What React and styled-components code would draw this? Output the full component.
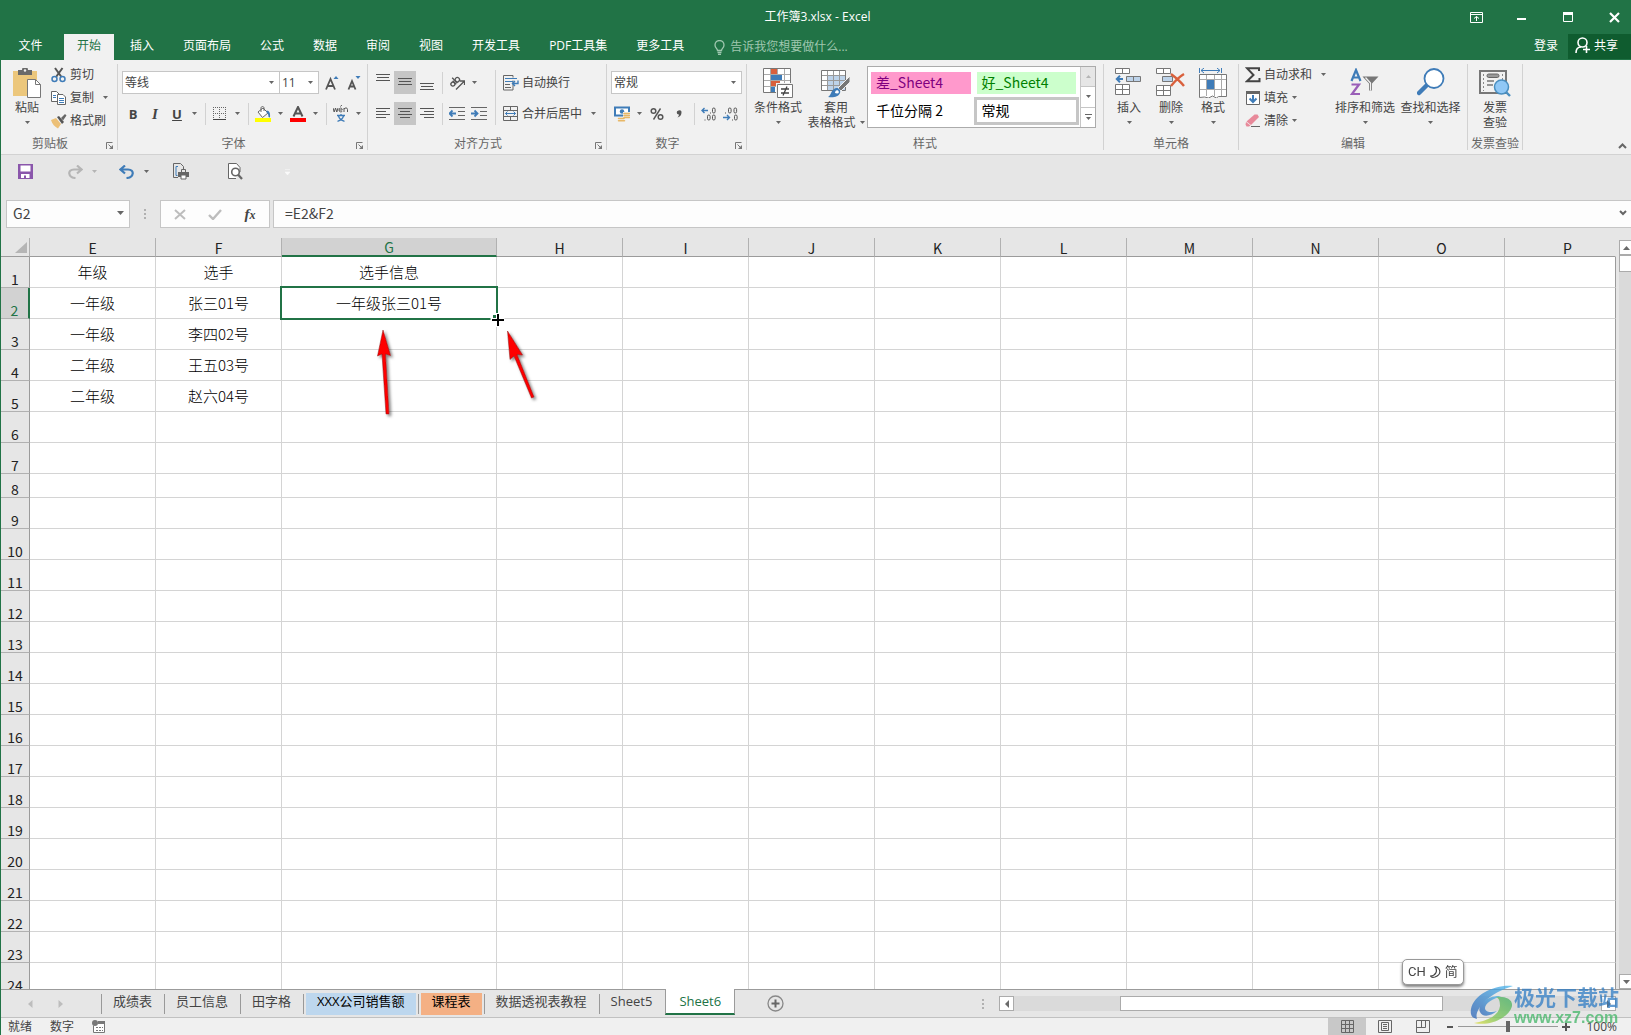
import React from 'react';
import styled, { createGlobalStyle, css } from 'styled-components';

const GREEN = '#217346';
const GRAY = '#6a6a6a';
const BLUE = '#3f7cb8';

const TABS = ['开始', '插入', '页面布局', '公式', '数据', '审阅', '视图', '开发工具', 'PDF工具集', '更多工具'];
const COLUMNS = [
    { id: 'E', w: 126 }, { id: 'F', w: 126 }, { id: 'G', w: 215 }, { id: 'H', w: 126 },
    { id: 'I', w: 126 }, { id: 'J', w: 126 }, { id: 'K', w: 126 }, { id: 'L', w: 126 },
    { id: 'M', w: 126 }, { id: 'N', w: 126 }, { id: 'O', w: 126 }, { id: 'P' },
];
const DATA = {
    1: { E: '年级', F: '选手', G: '选手信息' },
    2: { E: '一年级', F: '张三01号', G: '一年级张三01号' },
    3: { E: '一年级', F: '李四02号' },
    4: { E: '二年级', F: '王五03号' },
    5: { E: '二年级', F: '赵六04号' },
};
const ROWS = Array.from({ length: 24 }, (_, i) => i + 1);
const SHEETS = [
    { name: '成绩表' },
    { name: '员工信息' },
    { name: '田字格' },
    { name: 'XXX公司销售额', color: '#bdd7ee' },
    { name: '课程表', color: '#f4b084' },
    { name: '数据透视表教程' },
    { name: 'Sheet5' },
];

/* ---------- icons ---------- */

const Svg = ({ w = 16, h = 16, children, ...rest }) => (
    <svg width={w} height={h} viewBox={`0 0 ${w} ${h}`} fill="none" aria-hidden="true" {...rest}>{children}</svg>
);
const Caret = ({ color = '#666' }) => <Svg w={5} h={3}><path d="M0 0h5L2.5 3z" fill={color}/></Svg>;

const Lines = ({ y, widths }) => (
    <Svg w={14} h={19} shapeRendering="crispEdges">
        {widths.map(([x, w], i) => <rect key={i} x={x} y={y + i * 3} width={w} height="1" fill="#555"/>)}
    </Svg>
);
const PasteIcon = () => (
    <Svg w={28} h={30}>
        <path d="M0 3h24v25H0z" fill="#ecc77c"/>
        <path d="M5 2h4a3 3 0 0 1 6 0h4v5H5z" fill="#6a6a6a"/>
        <circle cx="12" cy="2.5" r="1.2" fill="#f1f1f1"/>
        <path d="M14.500 11.500h8l5 5v13h-13z" fill="#fff" stroke="#777"/>
        <path d="M22.500 11.500v5h5" stroke="#777"/>
    </Svg>
);
const CutIcon = () => (
    <Svg>
        <path d="M4 1l6.500 9M11.500 1L5 10" stroke="#555" strokeWidth="2"/>
        <circle cx="3.500" cy="12" r="2.500" stroke={BLUE} strokeWidth="1.500"/>
        <circle cx="11.500" cy="12" r="2.500" stroke={BLUE} strokeWidth="1.500"/>
    </Svg>
);
const CopyIcon = () => (
    <Svg>
        <path d="M.5 1.500h5l2.500 2.500v7.500h-7.500z" fill="#fff" stroke="#666"/>
        <path d="M2 5.500h3M2 7.500h3" stroke={BLUE}/>
        <path d="M6.500 4.500h5.500l2.500 2.500v7.500h-8z" fill="#fff" stroke="#666"/>
        <path d="M8 8.500h5M8 10.500h5M8 12.500h5" stroke={BLUE}/>
    </Svg>
);
const BrushIcon = () => (
    <Svg>
        <path d="M0 7l5-2 5 6-3 4.500C4 14 1 11 0 7z" fill="#ecc077"/>
        <path d="M6 4l2-1 5 6-2 2z" fill="#555"/>
        <path d="M10 5l4-4 1.500 1.500-3.500 5z" fill="#666"/>
    </Svg>
);
const FontSizeIcon = ({ small }) => (
    <Svg w={14} h={16}>
        <path d={small ? 'M1.500 14.500L5 6l3.500 8.500M2.700 11.500h4.600' : 'M1 14.500L5.500 4l4.500 10.500M2.500 11h6'} stroke="#555" strokeWidth="1.800"/>
        <path d={small ? 'M8.500 1h5L11 4z' : 'M8.500 4h5L11 1z'} fill={BLUE}/>
    </Svg>
);
const BorderIcon = () => (
    <Svg w={14} h={14} shapeRendering="crispEdges">
        <path d="M0 .5h13M0 6.500h13" stroke="#666" strokeDasharray="1 1"/>
        <path d="M.5 0v12M6.500 0v12M12.500 0v12" stroke="#666" strokeDasharray="1 1"/>
        <path d="M0 12.500h13" stroke="#444"/>
    </Svg>
);
const FillIcon = () => (
    <Svg>
        <path d="M3 6l5-4 5 5-5.500 4.500z" fill="#fff" stroke="#666"/>
        <path d="M6 6V2c0-2 3-2 3 0v3" stroke="#666"/>
        <path d="M11.500 4.500c3 0 4 3 3.500 7l-1.500-.5c0-2.500-.5-3.500-2-4.500z" fill={BLUE}/>
        <path d="M0 12h16v4H0z" fill="#ff0"/>
    </Svg>
);
const FontColorIcon = () => (
    <Svg>
        <path d="M3.500 10.500L8 1l4.500 9.500M5 7.500h6" stroke="#555" strokeWidth="2"/>
        <path d="M0 12h16v4H0z" fill="#f00"/>
    </Svg>
);
const PhoneticIcon = () => (
    <Svg w={16} h={17}>
        <path d="M0 3l1.200 4L2.500 3l1.300 4L5 3M6 5h3.200c0-2.600-3.200-2.600-3.200 0s3.200 2 3.200 1M7.500 1.500L8.800 0M11 7V3M11 4c1-1.500 3.500-1.500 3.500.5V7" stroke="#555"/>
        <path d="M4 10.500h8M8 9v1.500M5.500 11c.7 2.500 3 4.500 6 5.300M10.500 11c-.7 2.500-3 4.500-6 5.300" stroke={BLUE} strokeWidth="1.300"/>
    </Svg>
);
const OrientIcon = () => (
    <Svg>
        <g transform="rotate(-45 6 7)" stroke="#555" strokeWidth="1.300">
            <circle cx="3" cy="7" r="2"/><path d="M5.300 4.500v5M7 2v7.500"/><circle cx="9.300" cy="7" r="2.200"/>
        </g>
        <path d="M7 14.500l8-8M11 6h4.500v4" stroke="#555" strokeWidth="1.300"/>
    </Svg>
);
const IndentIcon = ({ right }) => (
    <Svg w={16} h={13}>
        <path d="M0 .5h16M9 4.500h7M9 8.500h7M0 12.500h16" stroke="#666" shapeRendering="crispEdges"/>
        <path d={right ? 'M0 6.500h6M3.500 3.500l3 3-3 3' : 'M7 6.500H1M3.500 3.500l-3 3 3 3'} stroke={BLUE} strokeWidth="1.800"/>
    </Svg>
);
const WrapIcon = () => (
    <Svg>
        <path d="M10 5.500v9.500H.5V.5h9.500v2" stroke="#666"/>
        <path d="M2 3.500h12M2 6.500h8" stroke={BLUE}/>
        <path d="M2 9.500h5M2 12.500h6" stroke="#666"/>
        <path d="M15 5.500v3H9.500M12 6l-2.500 2.500L12 11" stroke={BLUE} strokeWidth="1.400"/>
    </Svg>
);
const MergeIcon = () => (
    <Svg>
        <path d="M.5.5h14v14H.5zM.5 4.500h14M.5 10.500h14M7.500.5v4M7.500 10.500v4" stroke="#666"/>
        <path d="M2.500 7.500h10M4.500 5.500l-2 2 2 2M10.500 5.500l2 2-2 2" stroke={BLUE}/>
    </Svg>
);
const MoneyIcon = () => (
    <Svg>
        <path d="M1 1.500h14v8H1z" fill="#fff" stroke={BLUE} strokeWidth="2"/>
        <circle cx="8" cy="5.500" r="2.200" fill={BLUE}/>
        <path d="M9 6h7v8H9zM4 11h7v5H4z" fill="#f1f1f1"/>
        <path d="M10 7.500h5.500M10 9.500h5.500M10 11.500h5.500M4.500 12.500h5.500M4.500 14.800h6" stroke="#e8b766" strokeWidth="1.500" strokeLinecap="round"/>
    </Svg>
);
const PercentIcon = () => (
    <Svg w={14} h={14}>
        <circle cx="3.500" cy="4" r="2.300" stroke="#555" strokeWidth="1.500"/><circle cx="10.500" cy="10" r="2.300" stroke="#555" strokeWidth="1.500"/>
        <path d="M10.500 1.500l-7 11" stroke="#555" strokeWidth="1.400"/>
    </Svg>
);
const CommaIcon = () => <Svg w={8} h={10}><path d="M3.500 1.500a2 2 0 0 1 3 2C6.500 6 5 8 2.500 8.500c1-1 1.500-2 1.500-3a2 2 0 0 1-.5-4z" fill="#555"/></Svg>;
const Zero = ({ x, y }) => <rect x={x} y={y} width="2.600" height="5" rx="1.300" stroke="#555"/>;
const DecimalIcon = ({ less }) => (
    <Svg w={16} h={14}>
        {less ? (
            <>
                <path d="M2 6h1" stroke="#555"/><Zero x="5.500" y="1"/><Zero x="11" y="1"/>
                <path d="M0 10.500h6M4 8l2.500 2.500L4 13" stroke={BLUE} strokeWidth="1.400"/>
                <path d="M9 13h1" stroke="#555"/><Zero x="11.500" y="8"/>
            </>
        ) : (
            <>
                <path d="M7 3.500H1M3.500 1L1 3.500 3.500 6" stroke={BLUE} strokeWidth="1.400"/>
                <path d="M9 6h1" stroke="#555"/><Zero x="11.500" y="1"/>
                <path d="M3.500 13h1" stroke="#555"/><Zero x="6.500" y="8"/><Zero x="11.500" y="8"/>
            </>
        )}
    </Svg>
);
const CondIcon = () => (
    <Svg w={30} h={30}>
        <path d="M.5.5h27v24H.5z" fill="#fff" stroke="#777"/>
        <path d="M1 6.500h26M1 12.500h26M1 18.500h26M7.500 1v23M14.500 1v23M21.500 1v23" stroke="#aaa"/>
        <path d="M8 1h6v5H8zM8 13h9v5H8z" fill="#d9603c"/>
        <path d="M8 7h11v5H8zM8 19h4v5H8z" fill={BLUE}/>
        <path d="M13 15h17v15H13z" fill="#f1f1f1"/>
        <path d="M14.500 16.500h15v13h-15z" fill="#fff" stroke="#777"/>
        <path d="M18 21h8M18 25h8M24 18.500l-4 9" stroke="#444" strokeWidth="1.300"/>
    </Svg>
);
const TableFormatIcon = () => (
    <Svg w={30} h={30}>
        <path d="M.5 2.500h24v20H.5z" fill="#fff" stroke="#777"/>
        <path d="M7 8h17v14H7z" fill="#bdd3ea"/>
        <path d="M1 7.500h23M1 12.500h23M1 17.500h23M6.500 3v19M12.500 3v19M18.500 3v19" stroke="#999"/>
        <path d="M29 8v6l-9 9-3-3z" fill="#777" stroke="#f1f1f1"/>
        <path d="M7 29c3-1 3-8 8-9 3-.5 5 2 4 5-1.500 4-7 5-12 4z" fill={BLUE}/>
        <path d="M14 25c0-2 1.500-3.500 3-2.500s1 3-1 3z" fill="#fff"/>
    </Svg>
);
const InsertIcon = () => (
    <Svg w={28} h={30}>
        <path d="M.5.5h14v5H.5zM7.500.5v5M.5 16.500h14v10H.5zM7.500 16.500v10M.5 21.500h14" fill="#fff" stroke="#777"/>
        <path d="M11.500 8.500h14v5h-14zM18.500 8.500v5" fill="#bdd3ea" stroke="#777"/>
        <path d="M8 11H2M5 7.800L1.800 11 5 14.200" stroke={BLUE} strokeWidth="2"/>
    </Svg>
);
const DeleteIcon = () => (
    <Svg w={30} h={30}>
        <path d="M.5.5h14v5H.5zM7.500.5v5M.5 17.500h14v10H.5zM7.500 17.500v10M.5 22.500h14" fill="#fff" stroke="#777"/>
        <path d="M6.500 8.500h10v5h-10z" fill="#bdd3ea" stroke="#777"/>
        <path d="M15 6c4 3 9 7 13 12M28 6c-5 3-9 7-13 12" stroke="#d9603c" strokeWidth="2.400"/>
    </Svg>
);
const FormatIcon = () => (
    <Svg w={28} h={30}>
        <path d="M.5 0v5M22.500 0v5M2 2.500h19M5 0L2 2.500 5 5M18 0l3 2.500L18 5" stroke={BLUE}/>
        <path d="M.5 6.500h27v22h-8l-2 1.500-4-2-4 2-4-1-5 .5z" fill="#fff" stroke="#777"/>
        <path d="M1 11.500h26M1 21.500h26M7.500 7v21M15.500 7v21M22.500 7v21" stroke="#aaa"/>
        <path d="M8 12h7v9H8z" fill={BLUE}/>
    </Svg>
);
const SigmaIcon = () => <Svg><path d="M14 4V1.200H2L8.500 8 2 14.300h12.500V11" stroke="#444" strokeWidth="2"/></Svg>;
const FillDownIcon = () => (
    <Svg>
        <path d="M1.500 1.500h13v13h-13z" fill="#fff" stroke="#666"/><path d="M1 1h14v3H1z" fill="#666"/>
        <path d="M8 5v7M4.500 8.500L8 12l3.500-3.500" stroke={BLUE} strokeWidth="2"/>
    </Svg>
);
const EraserIcon = () => (
    <Svg>
        <path d="M9.500 1.500h3l1.500 2.500-8 8-4.500-3.500z" fill="#e8899a"/>
        <path d="M1 9l4.500 3.500-1.500 1h-2.500L.5 11.500z" fill="#e8899a"/>
        <path d="M6 13.500h9" stroke="#666"/>
    </Svg>
);
const SortIcon = () => (
    <Svg w={30} h={30}>
        <path d="M1.500 13L6 2l4.500 11M3 9.500h6" stroke={BLUE} strokeWidth="2.200"/>
        <path d="M1.500 16.500h7.500L2 26h8" stroke="#9a5fb8" strokeWidth="2.200"/>
        <path d="M12.500 8.500h16l-6.500 7v7h-3v-7z" fill="#777"/>
        <path d="M15.500 9.500l5 5.500v7.500" stroke="#f1f1f1" strokeWidth="1.300"/>
    </Svg>
);
const FindIcon = () => (
    <Svg w={28} h={30}>
        <path d="M11 16L2 25" stroke={BLUE} strokeWidth="4.500" strokeLinecap="round"/>
        <circle cx="17" cy="10.500" r="9.500" fill="#fff" stroke={BLUE} strokeWidth="1.800"/>
    </Svg>
);
const InvoiceIcon = () => (
    <Svg w={32} h={30}>
        <path d="M1 3h26v22H1z" fill="#f1f1f1" stroke="#777" strokeWidth="2"/>
        <path d="M4.500 6v17M23.500 6v17" stroke="#888" strokeDasharray="2 2"/>
        <rect x="8" y="6" width="12" height="3.500" rx="1.700" fill="#999" stroke="#666"/>
        <path d="M8 13h7M8 17h6" stroke="#777" strokeWidth="1.500"/>
        <path d="M27 24l4 4" stroke="#4a8fc0" strokeWidth="2.400"/>
        <circle cx="22.500" cy="19" r="7" fill="#90c8f6" stroke="#4a8fc0" strokeWidth="1.500"/>
    </Svg>
);
const LauncherIcon = () => (
    <Svg w={8} h={8}><path d="M.5 7V.5H6.500M2.500 2.500L6 6" stroke="#777"/><path d="M7 3v4H3z" fill="#777"/></Svg>
);
const SaveIcon = () => (
    <Svg w={15} h={15}><path d="M0 0h15v15H0z" fill="#8a56ab"/><path d="M2.500 1.500h10v6h-10z" fill="#fff"/><path d="M3 10h8.500v4H8v-2.500H6V14H3z" fill="#fff"/></Svg>
);
const UndoIcon = ({ flip, color }) => (
    <Svg w={16} h={14} transform={flip ? 'scale(-1 1)' : undefined}>
        <path d="M6 .5L1.500 4.500 6 8.500M2 4.500h7c7 0 6 8-1.500 8.500" stroke={color} strokeWidth="2.200"/>
    </Svg>
);
const QuickPrintIcon = () => (
    <Svg w={17} h={17}>
        <path d="M5 14.500H.5V.5h7l3 3V6" stroke="#666"/><path d="M5 3.500H3v9h1.500" stroke={BLUE}/>
        <path d="M8.500 6.500h4v3h-4z" stroke="#666"/><path d="M5 9h11v5H5z" fill="#666"/><path d="M8 12h5v4H8z" fill="#fff" stroke="#666"/>
    </Svg>
);
const PreviewIcon = () => (
    <Svg w={15} h={17}>
        <path d="M12 9V4.500L8.500.5h-8v15H8" fill="#fff" stroke="#666"/>
        <circle cx="7.500" cy="9" r="3.800" fill="#fff" stroke="#666" strokeWidth="1.600"/><path d="M10 11.500l4 4.500" stroke="#666" strokeWidth="2.200"/>
    </Svg>
);

/* ---------- page ---------- */

const Divider = () => <ShortRule/>;
const Drop = ({ label, color }) => <Tool $w={13} aria-label={label}><Caret color={color}/></Tool>;

const Combo = ({ label, value, width }) => (
    <ComboBox $w={width}>
        <select aria-label={label} defaultValue={value}><option>{value}</option></select>
        <Caret/>
    </ComboBox>
);

const Big = ({ icon, lines, width, drop }) => (
    <BigButton $w={width}>
        <BigIcon>{icon}</BigIcon>
        {lines.map((t, i) => <span key={t}>{t}{drop && i === 1 && <Caret/>}</span>)}
        {drop && lines.length === 1 && <span><Caret/></span>}
    </BigButton>
);

const Small = ({ icon, children, drop, gap }) => (
    <SmallRow $gap={gap}>
        <SmallButton><i>{icon}</i>{children}</SmallButton>
        {drop && <Drop label={children + '选项'}/>}
    </SmallRow>
);

const Group = ({ title, width, launcher, children }) => (
    <>
        <GroupBox $w={width}>
            <GroupBody>{children}</GroupBody>
            <GroupFoot><span>{title}</span>{launcher && <Launcher aria-label={title + '设置'}><LauncherIcon/></Launcher>}</GroupFoot>
        </GroupBox>
        <GroupRule/>
    </>
);

const Header = () => (
    <HeaderBar>
        <TitleRow>
            <h1>工作簿3.xlsx - Excel</h1>
            <WindowButtons>
                <button aria-label="功能区显示选项"><Svg w={13} h={11}><path d="M.5.5h12v10H.5zM.5 2.500h12M6.500 9V4.500M4 6.500l2.500-2 2.500 2" stroke="#fff"/></Svg></button>
                <button aria-label="最小化"><Svg w={10} h={11}><path d="M0 7h9" stroke="#fff" strokeWidth="2"/></Svg></button>
                <button aria-label="最大化"><Svg w={11} h={11}><path d="M.5.5h9v9h-9z" stroke="#fff"/><path d="M0 0h10v3H0z" fill="#fff"/></Svg></button>
                <button aria-label="关闭"><Svg w={11} h={11}><path d="M1 1l9 9M10 1l-9 9" stroke="#fff" strokeWidth="2.200"/></Svg></button>
            </WindowButtons>
        </TitleRow>
        <TabRow>
            <FileTab>文件</FileTab>
            {TABS.map((t, i) => <RibbonTab key={t} $active={i === 0}>{t}</RibbonTab>)}
            <TellMe>
                <Svg w={11} h={15}><path d="M3.500 10.500C3.500 8.500 1 8 1 5a4.500 4.500 0 0 1 9 0c0 3-2.500 3.500-2.500 5.500zM3.500 12.500h4M4 14.500h3" stroke="#9fc7af" strokeWidth="1.300"/></Svg>
                <input aria-label="告诉我" placeholder="告诉我您想要做什么..."/>
            </TellMe>
            <LoginButton>登录</LoginButton>
            <ShareButton>
                <Svg w={16} h={17}><circle cx="7.500" cy="5.500" r="4.500" stroke="#fff" strokeWidth="1.600"/><path d="M1 16c0-4 2-6 5-6M8 12.500h7M11.500 9v7" stroke="#fff" strokeWidth="1.600"/></Svg>
                共享
            </ShareButton>
        </TabRow>
    </HeaderBar>
);

const Ribbon = () => (
    <RibbonBar>
        <Group title="剪贴板" width={116} launcher>
            <Big width={44} icon={<PasteIcon/>} lines={['粘贴']} drop/>
            <SmallStack>
                <Small icon={<CutIcon/>}>剪切</Small>
                <Small icon={<CopyIcon/>} drop gap={5}>复制</Small>
                <Small icon={<BrushIcon/>}>格式刷</Small>
            </SmallStack>
        </Group>
        <Group title="字体" width={249} launcher>
            <ToolRows>
                <ToolRow>
                    <Combo label="字体" value="等线" width={158}/>
                    <Combo label="字号" value="11" width={40}/>
                    <Tool aria-label="增大字号"><FontSizeIcon/></Tool>
                    <Tool aria-label="减小字号"><FontSizeIcon small/></Tool>
                </ToolRow>
                <ToolRow>
                    <Tool aria-label="加粗"><b>B</b></Tool>
                    <Tool aria-label="倾斜"><em>I</em></Tool>
                    <Tool aria-label="下划线"><u>U</u></Tool>
                    <Drop label="下划线样式"/>
                    <Divider/>
                    <Tool aria-label="边框"><BorderIcon/></Tool>
                    <Drop label="边框样式"/>
                    <Divider/>
                    <Tool aria-label="填充颜色"><FillIcon/></Tool>
                    <Drop label="更多填充颜色"/>
                    <Tool aria-label="字体颜色"><FontColorIcon/></Tool>
                    <Drop label="更多字体颜色"/>
                    <Divider/>
                    <Tool aria-label="拼音"><PhoneticIcon/></Tool>
                    <Drop label="拼音选项"/>
                </ToolRow>
            </ToolRows>
        </Group>
        <Group title="对齐方式" width={238} launcher>
            <ToolRows>
                <ToolRow>
                    <Tool aria-label="顶端对齐"><Lines y={1} widths={[[0, 14], [1, 12], [0, 14]]}/></Tool>
                    <Tool aria-label="垂直居中" $on><Lines y={5} widths={[[0, 14], [1, 12], [0, 14]]}/></Tool>
                    <Tool aria-label="底端对齐"><Lines y={10} widths={[[0, 14], [1, 12], [0, 14]]}/></Tool>
                    <Divider/>
                    <Tool aria-label="方向"><OrientIcon/></Tool>
                    <Drop label="方向选项"/>
                </ToolRow>
                <ToolRow>
                    <Tool aria-label="左对齐"><Lines y={4} widths={[[0, 14], [0, 10], [0, 14], [0, 10]]}/></Tool>
                    <Tool aria-label="居中" $on><Lines y={4} widths={[[0, 14], [2, 10], [0, 14], [2, 10]]}/></Tool>
                    <Tool aria-label="右对齐"><Lines y={4} widths={[[0, 14], [4, 10], [0, 14], [4, 10]]}/></Tool>
                    <Divider/>
                    <Tool aria-label="减少缩进"><IndentIcon/></Tool>
                    <Tool aria-label="增加缩进"><IndentIcon right/></Tool>
                </ToolRow>
            </ToolRows>
            <TallRule/>
            <ToolRows>
                <Small icon={<WrapIcon/>}>自动换行</Small>
                <Small icon={<MergeIcon/>} drop gap={5}>合并后居中</Small>
            </ToolRows>
        </Group>
        <Group title="数字" width={139} launcher>
            <ToolRows>
                <ToolRow><Combo label="数字格式" value="常规" width={131}/></ToolRow>
                <ToolRow>
                    <Tool aria-label="会计数字格式"><MoneyIcon/></Tool>
                    <Drop label="货币选项"/>
                    <Tool aria-label="百分比"><PercentIcon/></Tool>
                    <Tool aria-label="千位分隔"><CommaIcon/></Tool>
                    <Divider/>
                    <Tool aria-label="增加小数位"><DecimalIcon/></Tool>
                    <Tool aria-label="减少小数位"><DecimalIcon less/></Tool>
                </ToolRow>
            </ToolRows>
        </Group>
        <Group title="样式" width={356}>
            <Big width={54} icon={<CondIcon/>} lines={['条件格式']} drop/>
            <Big width={62} icon={<TableFormatIcon/>} lines={['套用', '表格格式']} drop/>
            <Gallery>
                <GalleryGrid>
                    <Swatch $bg="#ff99cc" $fg="#800080">差_Sheet4</Swatch>
                    <Swatch $bg="#ccffcc" $fg="#008000">好_Sheet4</Swatch>
                    <Swatch>千位分隔 2</Swatch>
                    <Swatch $selected>常规</Swatch>
                </GalleryGrid>
                <GalleryNav>
                    <button aria-label="上一行" disabled><Svg w={5} h={3}><path d="M0 3h5L2.500 0z" fill="#b5b5b5"/></Svg></button>
                    <button aria-label="下一行"><Caret/></button>
                    <button aria-label="其他样式"><Svg w={7} h={7}><path d="M0 .5h7" stroke="#666"/><path d="M1 3h5L3.500 6z" fill="#666"/></Svg></button>
                </GalleryNav>
            </Gallery>
        </Group>
        <Group title="单元格" width={134}>
            <Big width={42} icon={<InsertIcon/>} lines={['插入']} drop/>
            <Big width={42} icon={<DeleteIcon/>} lines={['删除']} drop/>
            <Big width={42} icon={<FormatIcon/>} lines={['格式']} drop/>
        </Group>
        <Group title="编辑" width={228}>
            <SmallStack $w={89}>
                <Small icon={<SigmaIcon/>} drop gap={5}>自动求和</Small>
                <Small icon={<FillDownIcon/>} drop>填充</Small>
                <Small icon={<EraserIcon/>} drop>清除</Small>
            </SmallStack>
            <Big width={66} icon={<SortIcon/>} lines={['排序和筛选']} drop/>
            <Big width={65} icon={<FindIcon/>} lines={['查找和选择']} drop/>
        </Group>
        <Group title="发票查验" width={54}>
            <Big width={46} icon={<InvoiceIcon/>} lines={['发票', '查验']}/>
        </Group>
        <CollapseButton aria-label="折叠功能区"><Svg w={9} h={6}><path d="M1 5l3.500-3.500L8 5" stroke="#666" strokeWidth="2"/></Svg></CollapseButton>
    </RibbonBar>
);

const Quick = () => (
    <QuickBar>
        <Tool aria-label="保存"><SaveIcon/></Tool>
        <QuickPair>
            <Tool aria-label="恢复" disabled><UndoIcon flip color="#b5b5b5"/></Tool><Drop label="恢复列表" color="#b5b5b5"/>
        </QuickPair>
        <QuickPair>
            <Tool aria-label="撤消"><UndoIcon color={BLUE}/></Tool><Drop label="撤消列表"/>
        </QuickPair>
        <Tool $w={26} aria-label="快速打印"><QuickPrintIcon/></Tool>
        <Tool $w={26} aria-label="打印预览"><PreviewIcon/></Tool>
        <Tool aria-label="自定义"><Svg w={5} h={6}><path d="M0 .5h5M0 3h5L2.500 6z" fill="#fafafa" stroke="#fafafa" strokeWidth=".5"/></Svg></Tool>
    </QuickBar>
);

const Dots = () => <Svg w={2} h={10}><path d="M0 0h2v2H0zM0 4h2v2H0zM0 8h2v2H0z" fill="#b0b0b0"/></Svg>;

const FormulaBar = () => (
    <FormulaRow>
        <NameBox>
            <input aria-label="名称框" defaultValue="G2"/>
            <button aria-label="名称列表"><Svg w={7} h={4}><path d="M0 0h7L3.500 4z" fill="#666"/></Svg></button>
        </NameBox>
        <DotsBox><Dots/></DotsBox>
        <FormulaButtons>
            <Tool aria-label="取消"><Svg w={12} h={11}><path d="M1 1l10 9M11 1L1 10" stroke="#bdbdbd" strokeWidth="2"/></Svg></Tool>
            <Tool aria-label="输入"><Svg w={14} h={11}><path d="M1 6l4 4L13 1" stroke="#bdbdbd" strokeWidth="2.400"/></Svg></Tool>
            <Tool aria-label="插入函数"><Fx>f<small>x</small></Fx></Tool>
        </FormulaButtons>
        <FormulaInput>
            <input aria-label="编辑栏" defaultValue="=E2&F2"/>
            <button aria-label="展开编辑栏"><Svg w={8} h={6}><path d="M1 1l3 3 3-3" stroke="#666" strokeWidth="2"/></Svg></button>
        </FormulaInput>
    </FormulaRow>
);

const Annotations = () => (
    <NoteLayer width="560" height="190" viewBox="0 0 560 190" aria-hidden="true">
        <defs><filter id="shade" x="-50%" y="-20%" width="200%" height="140%"><feDropShadow dx="2" dy="2" stdDeviation="1.500" floodColor="#000" floodOpacity=".5"/></filter></defs>
        <g filter="url(#shade)" fill="#fe0000" stroke="#8d1a1a" strokeWidth=".5">
            <path d="M382 92l7.500 25.500-5-1.500 3.500 60h-3L381 116l-4.500 2z"/>
            <path d="M506.500 93l15 24-5.500-.5L533 159l-2.500 1L513 118l-4 3.500z"/>
        </g>
        <path d="M496.500 75v14M489.500 82h14" stroke="#fff" strokeWidth="5"/>
        <path d="M492 77h3v3h-3z" fill={GREEN}/>
        <path d="M497 76v12M491 82h12" stroke="#000" strokeWidth="2"/>
    </NoteLayer>
);

const Sheet = () => (
    <SheetArea>
        <GridView>
            <GridTable>
                <colgroup><col width="29"/>{COLUMNS.map(c => <col key={c.id} width={c.w}/>)}</colgroup>
                <thead>
                    <tr>
                        <Corner><Svg w={12} h={11}><path d="M12 0v11H0z" fill="#b5b5b5"/></Svg></Corner>
                        {COLUMNS.map(c => <ColHead key={c.id} $on={c.id === 'G'}>{c.id}</ColHead>)}
                    </tr>
                </thead>
                <tbody>
                    {ROWS.map(r => (
                        <GridRow key={r} $short={r === 8}>
                            <RowHead $on={r === 2}>{r}</RowHead>
                            {COLUMNS.map(c => <Cell key={c.id} $on={r === 2 && c.id === 'G'}>{DATA[r] && DATA[r][c.id]}</Cell>)}
                        </GridRow>
                    ))}
                </tbody>
            </GridTable>
        </GridView>
        <VScroll>
            <ScrollButton aria-label="向上滚动"><Svg w={7} h={4}><path d="M0 4h7L3.500 0z" fill={GRAY}/></Svg></ScrollButton>
            <VThumb/>
            <ScrollButton aria-label="向下滚动"><Svg w={7} h={4}><path d="M0 0h7L3.500 4z" fill={GRAY}/></Svg></ScrollButton>
        </VScroll>
        <Annotations/>
    </SheetArea>
);

const SheetTabs = () => (
    <SheetBar>
        <SheetNav>
            <button aria-label="上一个工作表"><Svg w={5} h={8}><path d="M4.500 0v8L0 4z" fill="#bdbdbd"/></Svg></button>
            <button aria-label="下一个工作表"><Svg w={5} h={8}><path d="M.5 0v8L5 4z" fill="#bdbdbd"/></Svg></button>
        </SheetNav>
        {SHEETS.map(s => <TabSlot key={s.name}><SheetTab $color={s.color}>{s.name}</SheetTab></TabSlot>)}
        <ActiveSheet>Sheet6</ActiveSheet>
        <AddSheet aria-label="新建工作表"><Svg w={17} h={17}><circle cx="8.500" cy="8.500" r="7.500" stroke="#888" strokeWidth="1.300"/><path d="M8.500 4.500v8M4.500 8.500h8" stroke="#666" strokeWidth="2"/></Svg></AddSheet>
        <HScroll>
            <Dots/>
            <HScrollLine>
                <ScrollButton aria-label="向左滚动"><Svg w={4} h={8}><path d="M4 0v8L0 4z" fill={GRAY}/></Svg></ScrollButton>
                <HTrack><span/></HTrack>
                <ScrollButton aria-label="向右滚动"><Svg w={4} h={8}><path d="M0 0v8l4-4z" fill={GRAY}/></Svg></ScrollButton>
            </HScrollLine>
        </HScroll>
    </SheetBar>
);

const Status = () => (
    <StatusBar>
        <span>就绪</span>
        <span>数字</span>
        <Svg w={13} h={13}><path d="M1.500 5.500v7h11v-10H7" fill="#fff" stroke="#777"/><path d="M6 1h7v3H6z" fill="#777"/><circle cx="3" cy="3" r="3" fill="#777"/><path d="M4 7.500h7M4 10.500h7" stroke="#777" strokeDasharray="2 1"/></Svg>
        <StatusRight>
            <ViewButton $on aria-label="普通"><Svg w={13} h={13}><path d="M.5.5h12v12H.5zM.5 4.500h12M.5 8.500h12M4.500.5v12M8.500.5v12" stroke="#666"/></Svg></ViewButton>
            <ViewButton aria-label="页面布局视图"><Svg w={14} h={13}><path d="M.5.5h13v12H.5zM3.500 2.500h7v8h-7zM5 4.500h4M5 6.500h4M5 8.500h4" stroke="#666"/></Svg></ViewButton>
            <ViewButton aria-label="分页预览"><Svg w={14} h={13}><path d="M.5.5h13v12H.5zM5.500.5v7M.5 7.500h9M9.500.5v7" stroke="#666"/></Svg></ViewButton>
            <ZoomButton aria-label="缩小"><Svg w={7} h={8}><path d="M0 4h6" stroke="#555" strokeWidth="2"/></Svg></ZoomButton>
            <ZoomSlider type="range" min="10" max="190" defaultValue="100" aria-label="显示比例"/>
            <ZoomButton aria-label="放大"><Svg w={8} h={8}><path d="M0 4h8M4 0v8" stroke="#555" strokeWidth="2"/></Svg></ZoomButton>
            <ZoomValue>100%</ZoomValue>
        </StatusRight>
    </StatusBar>
);

const Watermark = () => (
    <Mark>
        <Svg w={44} h={42}>
            <defs>
                <linearGradient id="mb" x1="1" y1="0" x2="0" y2="1"><stop offset="0" stopColor="#49b7ee"/><stop offset="1" stopColor="#2c62b5"/></linearGradient>
                <linearGradient id="mg" x1="1" y1="0" x2="0" y2="1"><stop offset="0" stopColor="#3fae63"/><stop offset=".6" stopColor="#7cc452"/><stop offset="1" stopColor="#e5dc3d"/></linearGradient>
            </defs>
            <path d="M43 1C26-1 4 9 1 24c-1 6 1 9 6 10C4 26 16 9 43 1z" fill="url(#mb)"/>
            <path d="M31 11c-13-1-24 8-21 16 2 5 10 5 17-1-6 2-12 1-12-3 0-5 8-9 16-12z" fill="url(#mb)"/>
            <path d="M26 12c9-1 17 2 16 9C40 31 22 42 4 38c14-2 25-8 26-17 0-5-1-8-4-9z" fill="url(#mg)"/>
        </Svg>
        <div><strong>极光下载站</strong><em>www.xz7.com</em></div>
    </Mark>
);

class App extends React.Component {
    render() {
        return (
            <Page>
                <GlobalStyle/>
                <Header/>
                <Frame>
                    <Ribbon/>
                    <Quick/>
                    <FormulaBar/>
                    <Sheet/>
                    <SheetTabs/>
                    <Status/>
                </Frame>
                <ImeBadge>
                    CH
                    <Svg w={11} h={12}><path d="M5 .5c6 2 7 8 0 10.500-2 .5-4 0-4.500-1C6 9.500 8 5 5 .5z" stroke="#444" strokeWidth="1.200"/></Svg>
                    简
                </ImeBadge>
                <Watermark/>
            </Page>
        );
    }
}
export default App;

/* ---------- styles ---------- */

const GlobalStyle = createGlobalStyle`
*{ box-sizing: border-box; }
body{ margin: 0; overflow: hidden; }
button, input, select{
    font: inherit;
    color: inherit;
    border: 0;
    padding: 0;
    margin: 0;
    background: none;
    outline: none;
}
svg{ display: block; flex: none; }
`;

const UI = '"Open Sans", "Noto Sans CJK SC", sans-serif';
const CELL = '"Noto Sans CJK SC", sans-serif';

const center = css`
display: flex;
align-items: center;
justify-content: center;
`;

const Page = styled.div`
display: flex;
flex-direction: column;
height: 100vh;
font: 12px/16px ${UI};
color: #444;
background: #e6e6e6;
`;

const Frame = styled.main`
flex: 1;
min-height: 0;
display: flex;
flex-direction: column;
border-left: 1px solid ${GREEN};
`;

const HeaderBar = styled.header`
background: ${GREEN};
color: #fff;
`;

const TitleRow = styled.div`
display: flex;
height: 34px;
align-items: center;

h1{
    flex: 1;
    margin: 0 0 0 182px;
    font-size: 12px;
    font-weight: 400;
    text-align: center;
}
`;

const WindowButtons = styled.div`
display: flex;
height: 100%;

button{
    ${center}
    width: 46px;
}
button:last-child{
    width: 40px;
    padding-left: 6px;
}
`;

const TabRow = styled.nav`
display: flex;
gap: 3px;
height: 26px;
`;

const RibbonTab = styled.button`
padding: 0 13px 3px;
white-space: nowrap;
color: ${p => (p.$active ? GREEN : '#fff')};
background: ${p => (p.$active ? '#f1f1f1' : 'transparent')};
`;

const FileTab = styled(RibbonTab)`
width: 61px;
`;

const TellMe = styled.label`
display: flex;
align-items: center;
gap: 5px;
margin-left: 14px;

input{ width: 130px; }
input::placeholder{ color: #9fc7af; opacity: 1; }
`;

const LoginButton = styled.button`
margin-left: auto;
padding: 0 7px 2px;
`;

const ShareButton = styled.button`
display: flex;
align-items: center;
gap: 3px;
width: 63px;
height: 25px;
padding: 0 0 2px 7px;
background: #0f5c2f;
`;

const RibbonBar = styled.section`
display: flex;
height: 95px;
background: #f1f1f1;
border-bottom: 1px solid #d2d2d2;
`;

const GroupBox = styled.div`
flex: none;
display: flex;
flex-direction: column;
width: ${p => p.$w}px;
`;

const GroupBody = styled.div`
flex: 1;
display: flex;
align-items: flex-start;
padding: 0 4px;
`;

const GroupFoot = styled.div`
display: flex;
height: 18px;
color: #666;

span{
    flex: 1;
    text-align: center;
    white-space: nowrap;
}
`;

const Launcher = styled.button`
display: flex;
align-items: center;
justify-content: flex-end;
width: 18px;
height: 20px;
padding-right: 3px;
`;

const GroupRule = styled.i`
flex: none;
width: 1px;
margin: 4px 0;
background: #d2d2d2;
`;

const ToolRows = styled.div`
display: flex;
flex-direction: column;
gap: 8px;
padding-top: 11px;
`;

const ToolRow = styled.div`
display: flex;
align-items: center;
height: 23px;
`;

const Tool = styled.button`
${center}
flex: none;
width: ${p => p.$w || 22}px;
height: 23px;
background: ${p => (p.$on ? '#c6c6c6' : 'transparent')};

b, em, u{
    font-size: 13px;
    font-weight: 700;
}
em{ font-family: "Liberation Serif", serif; font-size: 15px; }
`;

const ShortRule = styled.i`
width: 1px;
height: 22px;
margin: 0 3px 0 4px;
background: #d2d2d2;
`;

const TallRule = styled.i`
width: 1px;
height: 55px;
margin: 10px 5px 0 5px;
background: #d2d2d2;
`;

const ComboBox = styled.span`
position: relative;
display: flex;
align-items: center;
width: ${p => p.$w}px;
height: 23px;
margin-right: -1px;
border: 1px solid #c6c6c6;
background: #fff;

& + button{ margin-left: 3px; }
select{
    width: 100%;
    height: 100%;
    padding-left: 2px;
    appearance: none;
}
svg{
    position: absolute;
    right: 5px;
    pointer-events: none;
}
`;

const BigButton = styled.button`
flex: none;
display: flex;
flex-direction: column;
align-items: center;
width: ${p => p.$w}px;
padding-top: 8px;
line-height: 15px;

span{
    ${center}
    gap: 4px;
    height: 15px;
    white-space: nowrap;
}
`;

const BigIcon = styled.div`
height: 30px;
margin: 0 0 2px;
`;

const SmallStack = styled.div`
width: ${p => (p.$w ? p.$w + 'px' : 'auto')};
padding-top: 3px;
`;

const SmallRow = styled.div`
display: flex;
height: 23px;

& > button + button{ margin-left: ${p => p.$gap || 0}px; }
`;

const SmallButton = styled.button`
display: flex;
align-items: center;
gap: 3px;
padding: 0 0 0 2px;
white-space: nowrap;
`;

const Gallery = styled.div`
display: flex;
flex: 1;
height: 62px;
margin: 6px 3px 0 0;
border: 1px solid #ababab;
background: #fff;
`;

const GalleryGrid = styled.div`
flex: 1;
display: grid;
grid-template-columns: 1fr 1fr;
grid-template-rows: 28px 28px;
padding: 2px 1px 2px 0;
`;

const Swatch = styled.button`
padding: 0 0 2px 5px;
text-align: left;
font: 14px/20px ${CELL};
color: ${p => p.$fg || '#000'};
background: ${p => p.$bg || '#fff'};
margin: ${p => (p.$selected ? 0 : '3px')};
${p => p.$selected && 'border: 3px solid #c6c6c6;'}
`;

const GalleryNav = styled.div`
display: flex;
flex-direction: column;
width: 15px;
border-left: 1px solid #c6c6c6;

button{
    ${center}
    flex: 1;
}
button + button{ border-top: 1px solid #c6c6c6; }
button:disabled{ background: #e6e6e6; }
`;

const CollapseButton = styled.button`
align-self: flex-end;
margin: 0 4px 5px auto;
`;

const QuickBar = styled.div`
display: flex;
align-items: center;
gap: 28px;
height: 45px;
padding: 0 0 12px 13px;
`;

const QuickPair = styled.div`
display: flex;
gap: 2px;
margin-right: -13px;
`;

const FormulaRow = styled.div`
display: flex;
height: 28px;
margin-bottom: 10px;
padding-left: 5px;
font: 14px/20px ${CELL};
`;

const NameBox = styled.div`
display: flex;
width: 124px;
padding: 0 5px 2px 6px;
background: #fdfdfd;
border: 1px solid #c6c6c6;

input{ flex: 1; min-width: 0; }
`;

const DotsBox = styled.div`
${center}
width: 30px;
`;

const FormulaButtons = styled.div`
${center}
gap: 13px;
width: 110px;
margin-right: 3px;
background: #fdfdfd;
border: 1px solid #c6c6c6;
`;

const Fx = styled.i`
font: italic 700 15px/16px "Liberation Serif", serif;

small{ font-size: 12px; }
`;

const FormulaInput = styled.div`
flex: 1;
display: flex;
padding: 0 4px 2px 11px;
background: #fdfdfd;
border: 1px solid #c6c6c6;
border-right: 0;

input{ flex: 1; }
`;

const SheetArea = styled.section`
position: relative;
flex: 1;
min-height: 0;
display: flex;
overflow: hidden;
border-bottom: 1px solid #9b9b9b;
`;

const GridView = styled.div`
flex: 1;
min-width: 0;
overflow: hidden;
`;

const GridTable = styled.table`
width: 100%;
table-layout: fixed;
border-collapse: separate;
border-spacing: 0;
font: 14px/18px ${CELL};
color: #000;
`;

const headCell = css`
padding: 0;
font-weight: 400;
background: ${p => (p.$on ? '#d2d2d2' : '#e6e6e6')};
color: ${p => (p.$on ? GREEN : '#222')};
`;

const ColHead = styled.th`
${headCell}
height: 19px;
padding-top: 2px;
line-height: ${p => (p.$on ? 15 : 16)}px;
border-right: 1px solid #b1b1b1;
border-bottom: ${p => (p.$on ? `2px solid ${GREEN}` : '1px solid #9b9b9b')};

&:last-child{
    padding-left: 15px;
    border-right-color: transparent;
}
`;

const Corner = styled.th`
${headCell}
border-right: 1px solid #b1b1b1;
border-bottom: 1px solid #9b9b9b;

svg{ margin-left: 14px; }
`;

const GridRow = styled.tr`
height: ${p => (p.$short ? 24 : 31)}px;
`;

const RowHead = styled.th`
${headCell}
vertical-align: bottom;
line-height: 16px;
border-right: ${p => (p.$on ? `2px solid ${GREEN}` : '1px solid #9b9b9b')};
border-bottom: 1px solid #b1b1b1;
`;

const Cell = styled.td`
position: relative;
padding: 0;
text-align: center;
white-space: nowrap;
font-size: 15px;
font-weight: 300;
background: #fff;
border-right: 1px solid #d4d4d4;
border-bottom: 1px solid #d4d4d4;

&:last-child{ border-right-color: #9b9b9b; }

${p => p.$on && css`
    &::after{
        content: '';
        position: absolute;
        inset: -2px;
        z-index: 1;
        border: 2px solid ${GREEN};
    }
`}
`;

const NoteLayer = styled.svg`
position: absolute;
top: 0;
left: 0;
z-index: 2;
pointer-events: none;
`;

const VScroll = styled.div`
display: flex;
flex-direction: column;
width: 12px;
margin: 2px 0 0 3px;
background: #dadada;

button:last-child{ margin-top: auto; }
`;

const ScrollButton = styled.button`
${center}
flex: none;
min-width: 12px;
width: 15px;
height: 15px;
background: #fff;
border: 1px solid #ababab;
`;

const VThumb = styled.div`
height: 17px;
background: #fff;
border: 1px solid #ababab;
border-right: 0;
`;

const SheetBar = styled.nav`
display: flex;
align-items: center;
height: 28px;
font-size: 13px;
border-bottom: 1px solid #c1c1c1;
`;

const SheetNav = styled.div`
display: flex;
justify-content: space-between;
width: 100px;
padding: 0 38px 0 27px;

button{ height: 20px; }
`;

const TabSlot = styled.div`
display: flex;
align-items: center;

&::before{
    content: '';
    width: 1px;
    height: 20px;
    background: #999;
}
`;

const SheetTab = styled.button`
height: 22px;
margin: 0 2px;
padding: ${p => (p.$color ? '0 11px 5px' : '0 9px 5px')};
margin-right: ${p => (p.$color ? 2 : 3)}px;
white-space: nowrap;
color: ${p => (p.$color ? '#000' : '#444')};
background: ${p => p.$color || 'transparent'};
`;

const ActiveSheet = styled.button`
align-self: flex-start;
height: 26px;
margin: -1px 0 0 1px;
padding: 0 13px;
color: ${GREEN};
background: #fff;
border: 1px solid #9b9b9b;
border-width: 0 1px;
border-bottom: 2px solid ${GREEN};
position: relative;
`;

const AddSheet = styled.button`
margin-left: 32px;
`;

const HScroll = styled.div`
display: flex;
align-items: center;
gap: 15px;
width: 40%;
margin-left: auto;
padding: 0 15px 0 3px;
`;

const HScrollLine = styled.div`
flex: 1;
display: flex;
`;

const HTrack = styled.div`
flex: 1;
background: #dadada;

span{
    display: block;
    width: 55%;
    height: 15px;
    margin-left: 18%;
    background: #fff;
    border: 1px solid #ababab;
}
`;

const StatusBar = styled.footer`
display: flex;
align-items: center;
gap: 18px;
height: 17px;
padding-left: 7px;
background: #f0f0f0;
`;

const StatusRight = styled.div`
display: flex;
align-items: center;
height: 100%;
margin-left: auto;
padding-right: 14px;
`;

const ViewButton = styled.button`
${center}
width: 38px;
height: 100%;
background: ${p => (p.$on ? '#c8c8c8' : 'transparent')};
`;

const ZoomButton = styled.button`
${center}
width: 16px;
height: 16px;
`;

const ZoomSlider = styled.input`
appearance: none;
width: 100px;
height: 12px;
background: linear-gradient(#999, #999) center / 100% 1px no-repeat;

&::-webkit-slider-thumb{
    appearance: none;
    width: 4px;
    height: 11px;
    background: #666;
}
`;

const ZoomValue = styled.span`
width: 43px;
text-align: right;
font-size: 12px;
`;

const ImeBadge = styled.div`
${center}
position: fixed;
right: 167px;
bottom: 50px;
z-index: 3;
gap: 4px;
width: 62px;
height: 26px;
font: 13px/18px Roboto, "Noto Sans CJK SC", sans-serif;
background: #fff;
border: 1px solid #999;
border-radius: 5px;
box-shadow: 0 2px 3px rgba(0, 0, 0, .5);
`;

const Mark = styled.div`
display: flex;
position: fixed;
right: 12px;
bottom: 7px;
z-index: 4;
opacity: .75;
pointer-events: none;

div{
    display: flex;
    flex-direction: column;
}
strong{
    font: 700 21px/23px ${CELL};
    color: #2f7cc4;
}
em{
    font: 700 16px/20px "Liberation Sans", sans-serif;
    color: #41b566;
}
`;
